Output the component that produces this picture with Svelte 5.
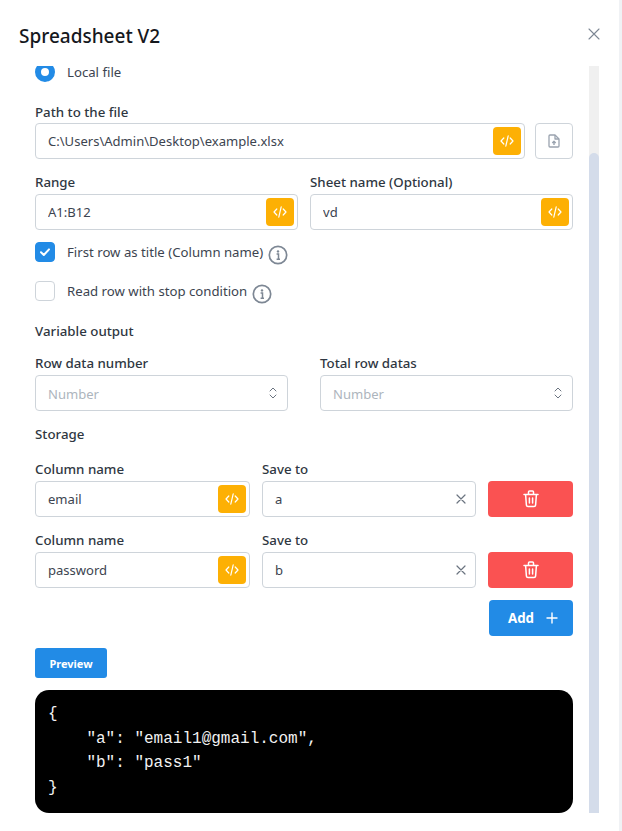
<script>
  const storage = [
    { column: 'email', target: 'a' },
    { column: 'password', target: 'b' }
  ];
  const preview = `{
    "a": "email1@gmail.com",
    "b": "pass1"
}`;
</script>

{#snippet codeBtn()}
  <button class="code-btn" aria-label="Use variable">
    <svg width="14" height="14" viewBox="0 0 14 14" fill="none" stroke="#fff" stroke-width="1.2" stroke-linecap="round" stroke-linejoin="round">
      <path d="M3.8 4 1 7l2.8 3M10.2 4 13 7l-2.8 3M8.2 1.8 5.8 12.2" />
    </svg>
  </button>
{/snippet}

{#snippet info()}
  <svg class="info" width="20" height="20" viewBox="0 0 20 20" fill="none">
    <circle cx="10" cy="10" r="8.7" stroke="#7d8794" stroke-width="1.7" />
    <circle cx="10" cy="6.4" r="1.2" fill="#7d8794" />
    <path d="M8.6 9h1.9v5M8.6 14.2h3.4" stroke="#7d8794" stroke-width="1.5" />
  </svg>
{/snippet}

{#snippet spinner()}
  <svg class="spin" width="8" height="12" viewBox="0 0 8 12" fill="none" stroke="#6b7480" stroke-width="1" stroke-linecap="round" stroke-linejoin="round">
    <path d="M1 4 4 1l3 3M1 8l3 3 3-3" />
  </svg>
{/snippet}

<div class="page">
  <div class="modal">
    <header>
      <h1>Spreadsheet V2</h1>
      <svg class="close" width="12" height="12" viewBox="0 0 12 12" stroke="#7d8794" stroke-width="1.1" stroke-linecap="round">
        <path d="M1 1l10 10M11 1 1 11" />
      </svg>
    </header>

    <div class="body">
      <div class="content">
        <div class="radio-row">
          <span class="radio-clip"><span class="radio"></span></span>
          <span class="opt">Local file</span>
        </div>

        <label class="lbl first" for="path">Path to the file</label>
        <div class="path-row">
          <div class="field grow">
            <input id="path" value="C:\Users\Admin\Desktop\example.xlsx" />
            {@render codeBtn()}
          </div>
          <button class="upload" aria-label="Upload file">
            <svg width="12" height="14" viewBox="0 0 12 14" fill="none" stroke="#9aa3af" stroke-width="1.3" stroke-linejoin="round">
              <path d="M1 2a1 1 0 0 1 1-1h5l4 4v7a1 1 0 0 1-1 1H2a1 1 0 0 1-1-1z" />
              <path d="M7 1v4h4" />
              <path d="M6 11V7.5M4.3 9 6 7.3 7.7 9" stroke-width="1.4" />
            </svg>
          </button>
        </div>

        <div class="two tight">
          <div class="col">
            <label class="lbl" for="range">Range</label>
            <div class="field">
              <input id="range" value="A1:B12" />
              {@render codeBtn()}
            </div>
          </div>
          <div class="col">
            <label class="lbl" for="sheet">Sheet name (Optional)</label>
            <div class="field">
              <input id="sheet" value="vd" />
              {@render codeBtn()}
            </div>
          </div>
        </div>

        <div class="check-row">
          <span class="check on">
            <svg width="12" height="12" viewBox="0 0 12 12" fill="none" stroke="#fff" stroke-width="2" stroke-linecap="round" stroke-linejoin="round">
              <path d="M2 6.3 4.8 9 10 3.4" />
            </svg>
          </span>
          <span class="opt">First row as title (Column name)</span>
          {@render info()}
        </div>
        <div class="check-row second">
          <span class="check"></span>
          <span class="opt">Read row with stop condition</span>
          {@render info()}
        </div>

        <div class="section output">Variable output</div>
        <div class="two wide">
          <div class="col">
            <label class="lbl" for="rownum">Row data number</label>
            <div class="field num">
              <input id="rownum" placeholder="Number" />
              {@render spinner()}
            </div>
          </div>
          <div class="col">
            <label class="lbl" for="total">Total row datas</label>
            <div class="field num">
              <input id="total" placeholder="Number" />
              {@render spinner()}
            </div>
          </div>
        </div>

        <div class="section storage">Storage</div>
        {#each storage as row}
          <div class="store-row">
            <div class="col">
              <span class="lbl">Column name</span>
              <div class="field">
                <input value={row.column} />
                {@render codeBtn()}
              </div>
            </div>
            <div class="col">
              <span class="lbl">Save to</span>
              <div class="field">
                <input value={row.target} />
                <svg class="clear" width="10" height="10" viewBox="0 0 10 10" stroke="#6b7480" stroke-width="1.2" stroke-linecap="round">
                  <path d="M1 1l8 8M9 1 1 9" />
                </svg>
              </div>
            </div>
            <button class="del" aria-label="Delete">
              <svg width="16" height="18" viewBox="0 0 16 18" fill="none" stroke="#fff" stroke-width="1.5" stroke-linecap="round" stroke-linejoin="round">
                <path d="M1 4.5h14M2.6 4.5l.8 10.6a1.6 1.6 0 0 0 1.6 1.4h6a1.6 1.6 0 0 0 1.6-1.4l.8-10.6M5.5 4.5V2a1 1 0 0 1 1-1h3a1 1 0 0 1 1 1v2.5M6.4 8v5M9.6 8v5" />
              </svg>
            </button>
          </div>
        {/each}

        <div class="add-row">
          <button class="add">
            Add
            <svg width="12" height="12" viewBox="0 0 12 12" stroke="#fff" stroke-width="1.4" stroke-linecap="round">
              <path d="M6 1v10M1 6h10" />
            </svg>
          </button>
        </div>

        <button class="preview-btn">Preview</button>
        <pre class="result">{preview}</pre>
      </div>

      <div class="track"><div class="thumb"></div></div>
    </div>
  </div>
</div>

<style>
  :global(body) {
    margin: 0;
    background: #f0f2f5;
  }
  .page {
    width: 622px;
    height: 831px;
    overflow: hidden;
    font-family: "Noto Sans", "Open Sans", sans-serif;
    color: #2f3742;
  }
  .modal {
    width: 619px;
    height: 831px;
    background: #fff;
  }
  header {
    height: 66px;
    box-sizing: border-box;
    padding: 22px 19px 0 19px;
    display: flex;
    justify-content: space-between;
  }
  h1 {
    margin: 0;
    font-size: 19px;
    line-height: 28px;
    font-weight: 500;
    color: #15181d;
  }
  .close {
    margin-top: 6px;
  }
  .body {
    display: flex;
    height: 747px;
    padding-left: 35px;
  }
  .content {
    width: 538px;
  }
  .track {
    width: 10px;
    margin-left: 16px;
    background: #f0f0f0;
    display: flex;
    padding-top: 87px;
    box-sizing: border-box;
  }
  .thumb {
    flex: 1;
    background: #d4dcea;
    border-radius: 5px 5px 0 0;
  }
  /* the list is scrolled: only the radio's top is cut by the viewport */
  .radio-row {
    display: flex;
    align-items: flex-start;
    gap: 12px;
    height: 16px;
  }
  .radio-clip {
    width: 20px;
    height: 16px;
    flex: none;
    overflow: hidden;
  }
  .radio {
    display: block;
    width: 20px;
    height: 20px;
    margin-top: -4px;
    box-sizing: border-box;
    border-radius: 50%;
    border: 6px solid #228be6;
    background: #fff;
  }
  .opt {
    font-size: 13.2px;
    line-height: 20px;
    color: #3c4450;
  }
  .radio-row .opt {
    line-height: 12px;
  }
  .lbl {
    display: block;
    font-size: 13.3px;
    font-weight: 500;
    line-height: 20px;
    margin-bottom: 2px;
    color: #2f3742;
  }
  .lbl.first {
    margin-top: 20px;
    margin-bottom: 1px;
  }
  .path-row {
    display: flex;
    gap: 10px;
  }
  .grow {
    flex: 1;
  }
  .field {
    height: 36px;
    box-sizing: border-box;
    border: 1px solid #ced4da;
    border-radius: 4px;
    background: #fff;
    display: flex;
    align-items: center;
    padding-right: 3px;
  }
  input {
    flex: 1;
    min-width: 0;
    border: 0;
    outline: 0;
    padding: 0 0 0 12px;
    background: none;
    font: inherit;
    font-size: 13.05px;
    color: #3c4450;
  }
  input::placeholder {
    color: #adb5bd;
  }
  .num input {
    padding-top: 1px;
  }
  button {
    font: inherit;
    border: 0;
    padding: 0;
    cursor: pointer;
  }
  .code-btn {
    width: 28px;
    height: 28px;
    border-radius: 4px;
    background: #fdb004;
    display: flex;
    align-items: center;
    justify-content: center;
  }
  .upload {
    width: 38px;
    height: 36px;
    box-sizing: border-box;
    border: 1px solid #ced4da;
    border-radius: 4px;
    background: #fff;
    display: flex;
    align-items: center;
    justify-content: center;
  }
  .two {
    display: grid;
    grid-template-columns: 1fr 1fr;
  }
  .two.tight {
    gap: 12px;
    margin-top: 13px;
  }
  .two.wide {
    gap: 32px;
    margin-top: 12px;
  }
  .check-row {
    display: flex;
    align-items: flex-start;
    margin-top: 12px;
    height: 20px;
  }
  .check-row.second {
    margin-top: 19px;
  }
  .check {
    width: 20px;
    height: 20px;
    box-sizing: border-box;
    border: 1px solid #ced4da;
    border-radius: 4px;
    margin-right: 12px;
    flex: none;
    display: flex;
    align-items: center;
    justify-content: center;
  }
  .check.on {
    background: #228be6;
    border-color: #228be6;
  }
  .info {
    margin: 3px 0 0 5px;
    flex: none;
  }
  .section {
    font-size: 13.3px;
    font-weight: 500;
    line-height: 20px;
  }
  .output {
    margin-top: 20px;
  }
  .storage {
    margin-top: 13px;
  }
  .spin {
    margin-right: 7px;
  }
  .clear {
    margin-right: 6px;
  }
  .store-row {
    display: grid;
    grid-template-columns: 215px 214px 85px;
    column-gap: 12px;
    align-items: end;
    margin-top: 15px;
  }
  .store-row + .store-row {
    margin-top: 13px;
  }
  .del {
    height: 36px;
    border-radius: 4px;
    background: #fa5252;
    display: flex;
    align-items: center;
    justify-content: center;
  }
  .add-row {
    display: flex;
    justify-content: flex-end;
    margin-top: 12px;
  }
  .add {
    width: 84px;
    height: 36px;
    box-sizing: border-box;
    padding-left: 19px;
    border-radius: 4px;
    background: #228be6;
    color: #fff;
    font-size: 13.3px;
    font-weight: 700;
    display: flex;
    align-items: center;
    gap: 12px;
  }
  .preview-btn {
    display: block;
    margin-top: 12px;
    width: 72px;
    height: 30px;
    border-radius: 3px;
    background: #228be6;
    color: #fff;
    font-size: 11px;
    font-weight: 700;
  }
  .result {
    margin: 12px 0 0;
    height: 123px;
    box-sizing: border-box;
    padding: 12px 13px;
    border-radius: 14px;
    background: #000;
    color: #f2f2f2;
    font-family: "Liberation Mono", monospace;
    font-size: 16px;
    line-height: 24.5px;
  }
</style>
